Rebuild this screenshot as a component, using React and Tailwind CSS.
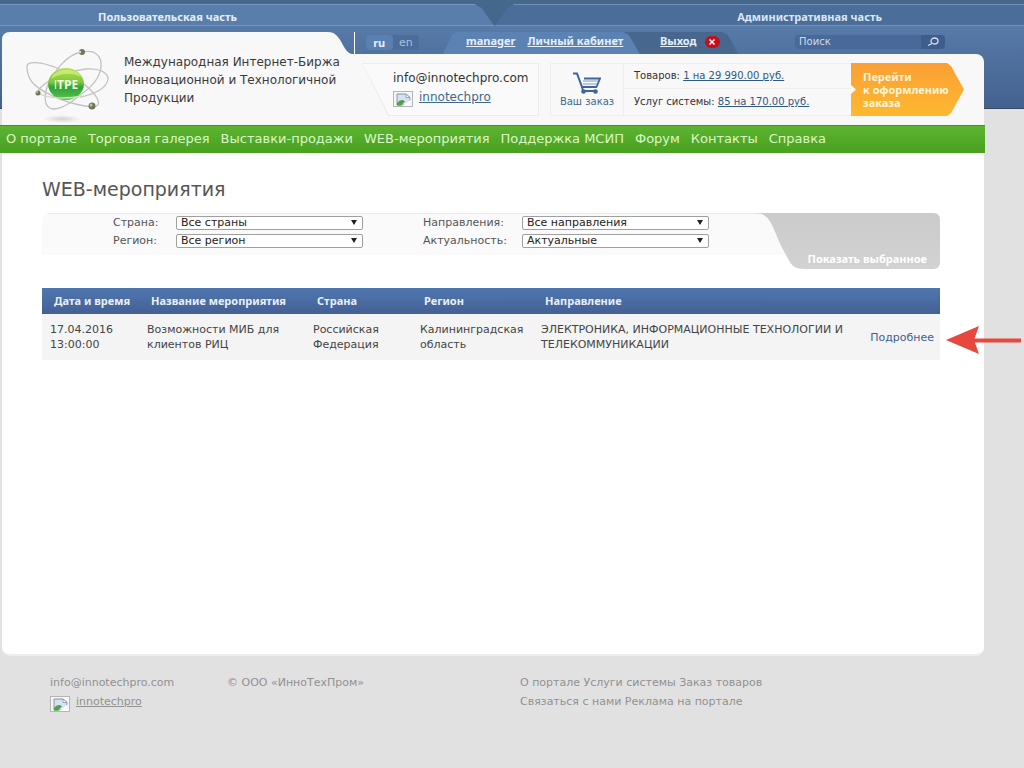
import { useState } from "react";

const MENU = [
  "О портале",
  "Торговая галерея",
  "Выставки-продажи",
  "WEB-мероприятия",
  "Поддержка МСИП",
  "Форум",
  "Контакты",
  "Справка",
];

const FILTERS = [
  { id: "country", label: "Страна:", options: ["Все страны"] },
  { id: "direction", label: "Направления:", options: ["Все направления"] },
  { id: "region", label: "Регион:", options: ["Все регион"] },
  { id: "actuality", label: "Актуальность:", options: ["Актуальные"] },
];

const EVENTS = [
  {
    date: "17.04.2016",
    time: "13:00:00",
    name: "Возможности МИБ для клиентов РИЦ",
    country: "Российская Федерация",
    region: "Калининградская область",
    direction: "ЭЛЕКТРОНИКА, ИНФОРМАЦИОННЫЕ ТЕХНОЛОГИИ И ТЕЛЕКОММУНИКАЦИИ",
  },
];

function Logo() {
  return (
    <svg viewBox="0 0 86 78" className="h-[78px] w-[86px] shrink-0" aria-label="ITPE">
      <defs>
        <linearGradient id="ball" x1="0" y1="0" x2="0" y2="1">
          <stop offset="0" stopColor="#b9e04a" />
          <stop offset="0.45" stopColor="#7cc63c" />
          <stop offset="0.6" stopColor="#2fa336" />
          <stop offset="1" stopColor="#5cc24a" />
        </linearGradient>
        <radialGradient id="shade">
          <stop offset="0" stopColor="#d2d2d2" />
          <stop offset="1" stopColor="#f8f8f8" />
        </radialGradient>
      </defs>
      <ellipse cx="36" cy="73" rx="19" ry="4" fill="url(#shade)" />
      <g fill="none" stroke="#c4c1c1" strokeWidth="1.3">
        <path d="M21 41C27 26 41 8 56 6C70 3 76 11 75 21C74 31 66 41 54 49C45 57 36 63 27 63C18 62 18 51 21 41Z" />
        <path d="M1 21C0 14 16 16 31 22C47 28 65 42 71 52C76 62 68 62 54 59C38 56 14 46 6 36C3 32 1 27 1 21Z" />
        <path d="M12 47C12 38 40 25 60 23C74 22 82 27 82 33C81 43 66 49 54 51" />
      </g>
      <ellipse cx="40" cy="38" rx="18" ry="16" fill="url(#ball)" />
      <path d="M25 33C28 22 50 20 55 31C46 26 34 27 25 33Z" fill="#def194" opacity="0.6" />
      <path d="M12 47C22 53 42 53 56 50" fill="none" stroke="#d3dccb" strokeWidth="1.3" />
      <text x="40" y="43" textAnchor="middle" fontFamily="Open Sans, sans-serif" fontSize="12" fill="#eefbe2">
        I<tspan fontWeight="700">TPE</tspan>
      </text>
      <g fill="#6d7a58">
        <circle cx="56" cy="6" r="3" />
        <circle cx="12" cy="47" r="2.5" />
        <circle cx="66" cy="60" r="3.5" />
      </g>
      <circle cx="54" cy="6" r="1.2" fill="#d3dcc4" />
      <circle cx="11" cy="46" r="1" fill="#c2cdaf" />
      <circle cx="65" cy="59" r="1.5" fill="#b4c792" />
    </svg>
  );
}

function BrokenImage() {
  return (
    <svg viewBox="0 0 20 16" className="h-4 w-5 shrink-0" aria-hidden="true">
      <rect x="0.5" y="0.5" width="19" height="15" fill="#f7f7f7" stroke="#b5b5b5" />
      <path d="M4 3H13L17 6.500V14H4Z" fill="#d5e2f6" stroke="#8593ab" strokeWidth="1" />
      <path d="M13 3V6.500H17Z" fill="#fff" stroke="#8593ab" strokeWidth="0.8" />
      <path d="M4 14.500V12Q8 7 12 10.500L8 14.500Z" fill="#4da542" />
      <path d="M9 15L17.800 8.500V15Z" fill="#fff" />
    </svg>
  );
}

function CartIcon() {
  return (
    <svg viewBox="0 0 28 22" className="h-[22px] w-7" fill="none" stroke="#3b659c" aria-hidden="true">
      <path d="M0 1.500H4L9 15H24" strokeWidth="2" />
      <path d="M11 6.500H27L23.500 15" strokeWidth="1.800" />
      <path d="M10 9H25M10 12H24" strokeWidth="1.200" stroke="#7f9cc2" />
      <path d="M9 15L10 19H23" strokeWidth="1.800" />
      <circle cx="10.500" cy="19.500" r="2.300" fill="#3b659c" stroke="none" />
      <circle cx="22.500" cy="19.500" r="2.300" fill="#3b659c" stroke="none" />
    </svg>
  );
}

function TopTabs() {
  return (
    <div className="flex h-[26px] border-t-4 border-[#456789] bg-[#44678c] text-[11px] leading-[24px] font-bold">
      <div className="w-[48.300%] border-y border-[#7796bb] bg-[#5a7eac] pl-[98px] [clip-path:polygon(0_0,calc(100%_-_20px)_0,calc(100%_-_13px)_4px,100%_100%,0_100%)]">
        <a href="#user" className="block text-[#e3eefa]">
          Пользовательская часть
        </a>
      </div>
      <div className="flex flex-1 justify-end border-y border-[#7090b8] bg-[#4a6d9a] pr-[142px] [clip-path:polygon(20px_0,100%_0,100%_100%,0_100%,13px_4px)]">
        <a href="#admin" className="block text-[#dbe7f5]">
          Административная часть
        </a>
      </div>
    </div>
  );
}

function UserBar() {
  return (
    <div className="flex h-7 items-end pr-[39px]">
      <div className="ml-[2px] h-[22px] w-px bg-white" />
      <div className="mb-1 ml-[11px] flex h-[15px] w-[53px] rounded-sm bg-[#4c6d9a] text-[11px] leading-[13px]">
        <button className="w-1/2 rounded-sm bg-[#5a80b2] pb-px font-bold text-[#e6f1fc]">ru</button>
        <button className="w-1/2 text-[#a9c1df]">en</button>
      </div>
      <div className="ml-6 flex h-[22px] text-[11px] leading-[18px] font-bold text-[#e6f0fb]">
        <div className="flex w-[197px] gap-3 bg-[#5c81b3] pl-[23px] [clip-path:polygon(14px_0,180px_0,186px_3px,100%_100%,0_100%,9px_3px)]">
          <a href="#manager" className="underline">manager</a>
          <a href="#cabinet" className="underline">Личный кабинет</a>
        </div>
        <div className="-ml-4 flex w-[114px] items-start gap-2 bg-[#48678f] pl-9 [clip-path:polygon(0_0,98px_0,104px_3px,100%_100%,16px_100%,5px_3px)]">
          <a href="#logout" className="underline">Выход</a>
          <button aria-label="Закрыть" className="mt-1 flex h-3 w-[15px] items-center justify-center rounded-full bg-[#c3101c]">
            <svg viewBox="0 0 6 6" className="h-1.5 w-1.5" stroke="#fff" strokeWidth="1.5" aria-hidden="true">
              <path d="M0.500 0.500L5.500 5.500M5.500 0.500L0.500 5.500" />
            </svg>
          </button>
        </div>
      </div>
      <form className="mb-[5px] ml-auto flex h-[14px] w-[150px] overflow-hidden rounded-sm bg-[#48699a]">
        <input
          aria-label="Поиск"
          placeholder="Поиск"
          className="min-w-0 flex-1 bg-transparent px-1 text-[10px] leading-[14px] placeholder-[#cfdcec] outline-none"
        />
        <button type="button" aria-label="Найти" className="flex w-6 items-center justify-center bg-[#3f5d8c]">
          <svg viewBox="0 0 12 10" className="h-2.5 w-3" fill="none" stroke="#d4e0f0" strokeWidth="1.3" aria-hidden="true">
            <ellipse cx="7.500" cy="4" rx="3.500" ry="3" />
            <path d="M5 6.500L1 8.500" />
          </svg>
        </button>
      </form>
    </div>
  );
}

function Contacts() {
  return (
    <div className="ml-[10px] w-[177px] bg-[#ececec] p-px [clip-path:polygon(0_0,100%_0,100%_100%,26px_100%)]">
      <div className="flex h-full flex-col bg-[#fafafa] pt-[7px] pl-[30px] [clip-path:polygon(0_0,100%_0,100%_100%,26px_100%)]">
        <span className="text-[12px] leading-[14px] text-[#333]">info@innotechpro.com</span>
        <div className="mt-[6px] flex gap-1.5">
          <BrokenImage />
          <a href="#innotechpro" className="text-[12px] leading-[13px] text-[#41688f] underline">
            innotechpro
          </a>
        </div>
      </div>
    </div>
  );
}

function Order() {
  return (
    <div className="ml-[11px] flex flex-1 pr-5">
      <a href="#cart" className="flex w-[74px] flex-col items-center border border-[#eee] pt-2 text-[10px] leading-4 text-[#41688f]">
        <CartIcon />
        Ваш заказ
      </a>
      <div className="flex-1 border-y border-[#eee] text-[10px] text-[#333]">
        <p className="h-[25px] border-b border-[#eee] pl-[10px] leading-6">
          Товаров: <a href="#goods" className="text-[#2f5787] underline">1 на 29 990.00 руб.</a>
        </p>
        <p className="pl-[10px] leading-[26px]">
          Услуг системы: <a href="#services" className="text-[#2f5787] underline">85 на 170.00 руб.</a>
        </p>
      </div>
      <button className="w-[113px] bg-linear-to-b from-[#fb9f35] to-[#fdb92f] pl-3 text-left text-[11px] leading-[13px] font-bold text-[#fff6dc] [clip-path:polygon(0_0,96px_0,100px_3px,100%_50%,100px_50px,96px_100%,0_100%,0_31px,5px_50%,0_22px)]">
        Перейти
        <br />к оформлению
        <br />
        заказа
      </button>
    </div>
  );
}

function Header() {
  return (
    <header className="mr-10 ml-0.5 flex h-[99px]">
      <div className="mt-1.5 flex w-[350px] shrink-0 items-start bg-[#f8f8f8] pt-[14px] pl-6 [clip-path:path('M0_8Q0_0_8_0H326C340_0_340_20_350_22V93H0Z')]">
        <Logo />
        <p className="mt-[7px] ml-3 text-[12px] leading-[18px] text-[#3a3a3a]">
          Международная Интернет-Биржа
          <br />
          Инновационной и Технологичной
          <br />
          Продукции
        </p>
      </div>
      <div className="flex min-w-0 flex-1 flex-col">
        <UserBar />
        <div className="flex flex-1 rounded-tr-lg bg-[#f8f8f8] pt-[9px] pb-[9px]">
          <Contacts />
          <Order />
        </div>
      </div>
    </header>
  );
}

function Filter() {
  const [values, setValues] = useState({});

  return (
    <form className="mt-3 flex items-start rounded-lg bg-[linear-gradient(#e9e9e9_1px,#fafafa_1px)] bg-[length:100%_42px] bg-no-repeat">
      <div className="ml-[71px] grid grid-cols-[63px_187px_159px_187px] gap-y-1 pt-[3px]">
        {FILTERS.map((f, i) => (
          <div key={f.id} className="col-span-2 grid grid-cols-subgrid items-center">
            <label htmlFor={f.id} className={i % 2 ? "pl-[60px] text-[11px] leading-[14px] text-[#555]" : "text-[11px] leading-[14px] text-[#555]"}>
              {f.label}
            </label>
            <div className="relative flex">
              <select
                id={f.id}
                value={values[f.id] || f.options[0]}
                onChange={(e) => setValues({ ...values, [f.id]: e.target.value })}
                className="h-[14px] w-full appearance-none rounded-xs border border-[#a0a0a0] bg-white pl-1 text-[11px] leading-3 text-[#222]"
              >
                {f.options.map((o) => (
                  <option key={o}>{o}</option>
                ))}
              </select>
              <svg viewBox="0 0 6 5" className="pointer-events-none absolute top-1 right-1.5 h-[5px] w-1.5" aria-hidden="true">
                <path d="M0 0H6L3 5Z" fill="#222" />
              </svg>
            </div>
          </div>
        ))}
      </div>
      <button
        type="button"
        className="ml-auto h-14 w-[185px] rounded-r-md bg-linear-to-b from-[#cbcbcb] to-[#d2d2d2] pt-9 pr-[13px] text-right text-[11px] leading-[18px] font-bold whitespace-nowrap text-white [clip-path:path('M0_0C18_0_18_20_30_40C36_52_38_56_50_56H185V0Z')]"
      >
        Показать выбранное
      </button>
    </form>
  );
}

function EventsTable() {
  return (
    <table className="mt-[19px] w-full table-fixed text-left text-[11px] text-[#444]">
      <thead>
        <tr className="h-[26px] bg-linear-to-b from-[#4f77b0] to-[#446094] text-[#e8f1fb]">
          <th className="w-[97px] pl-3">Дата и время</th>
          <th className="w-[166px] pl-3">Название мероприятия</th>
          <th className="w-[107px] pl-3">Страна</th>
          <th className="w-[121px] pl-3">Регион</th>
          <th className="pl-3">Направление</th>
          <th className="w-[77px]" aria-label="Действие"></th>
        </tr>
      </thead>
      <tbody>
        {EVENTS.map((e) => (
          <tr key={e.date + e.time} className="h-[46px] bg-[#f4f4f4] leading-[15px]">
            <td className="pl-2">
              {e.date}
              <br />
              {e.time}
            </td>
            <td className="pr-4 pl-2">{e.name}</td>
            <td className="pr-4 pl-2">{e.country}</td>
            <td className="pl-2">{e.region}</td>
            <td className="pl-2">{e.direction}</td>
            <td className="relative pr-1.5 text-right">
              <a href="#details" className="text-[#41608f]">Подробнее</a>
              <svg viewBox="0 0 76 30" className="absolute top-[11px] left-full ml-1.5 h-[30px] w-[76px]" aria-hidden="true">
                <path d="M28 15.500H75" stroke="#e8473d" strokeWidth="4" />
                <path d="M0 15L33 1L28 15L33 29Z" fill="#e8473d" />
              </svg>
            </td>
          </tr>
        ))}
      </tbody>
    </table>
  );
}

function Footer() {
  return (
    <footer className="flex h-28 pt-[17px] pl-[50px] text-[11px] leading-[19px] text-[#919191]">
      <div className="w-[177px]">
        info@innotechpro.com
        <div className="flex gap-1.5">
          <span className="mt-1 flex">
            <BrokenImage />
          </span>
          <a href="#innotechpro" className="underline">innotechpro</a>
        </div>
      </div>
      <div className="w-[293px]">© ООО «ИнноТехПром»</div>
      <nav>
        <a href="#about">О портале</a> <a href="#services">Услуги системы</a> <a href="#order">Заказ товаров</a>
        <br />
        <a href="#contact">Связаться с нами</a> <a href="#ads">Реклама на портале</a>
      </nav>
    </footer>
  );
}

export default function App() {
  return (
    <div className="flex min-h-screen flex-col bg-[#e1e1e1] bg-[linear-gradient(#5d82b0,#44628f_108px,#37475c_108px)] bg-[length:100%_109px] bg-no-repeat font-['DejaVu_Sans',sans-serif] [&_.font-bold]:font-['Noto_Sans',sans-serif] [&_th]:font-['Noto_Sans',sans-serif]">
      <TopTabs />
      <Header />
      <nav className="mr-[39px] flex h-7 gap-[11px] border-t border-[#4a8f28] bg-linear-to-b from-[#5cb431] to-[#4aa01f] pl-1.5 text-[13px] leading-[26px] whitespace-nowrap text-[#dcf7c8]">
        {MENU.map((item) => (
          <a key={item} href="#menu">
            {item}
          </a>
        ))}
      </nav>
      <main className="mr-10 ml-0.5 flex-1 rounded-b-lg border-b-2 border-[#ededed] bg-white pt-6 pr-11 pl-10">
        <h1 className="text-[19px] leading-6 text-[#555]">WEB-мероприятия</h1>
        <Filter />
        <EventsTable />
      </main>
      <Footer />
    </div>
  );
}
